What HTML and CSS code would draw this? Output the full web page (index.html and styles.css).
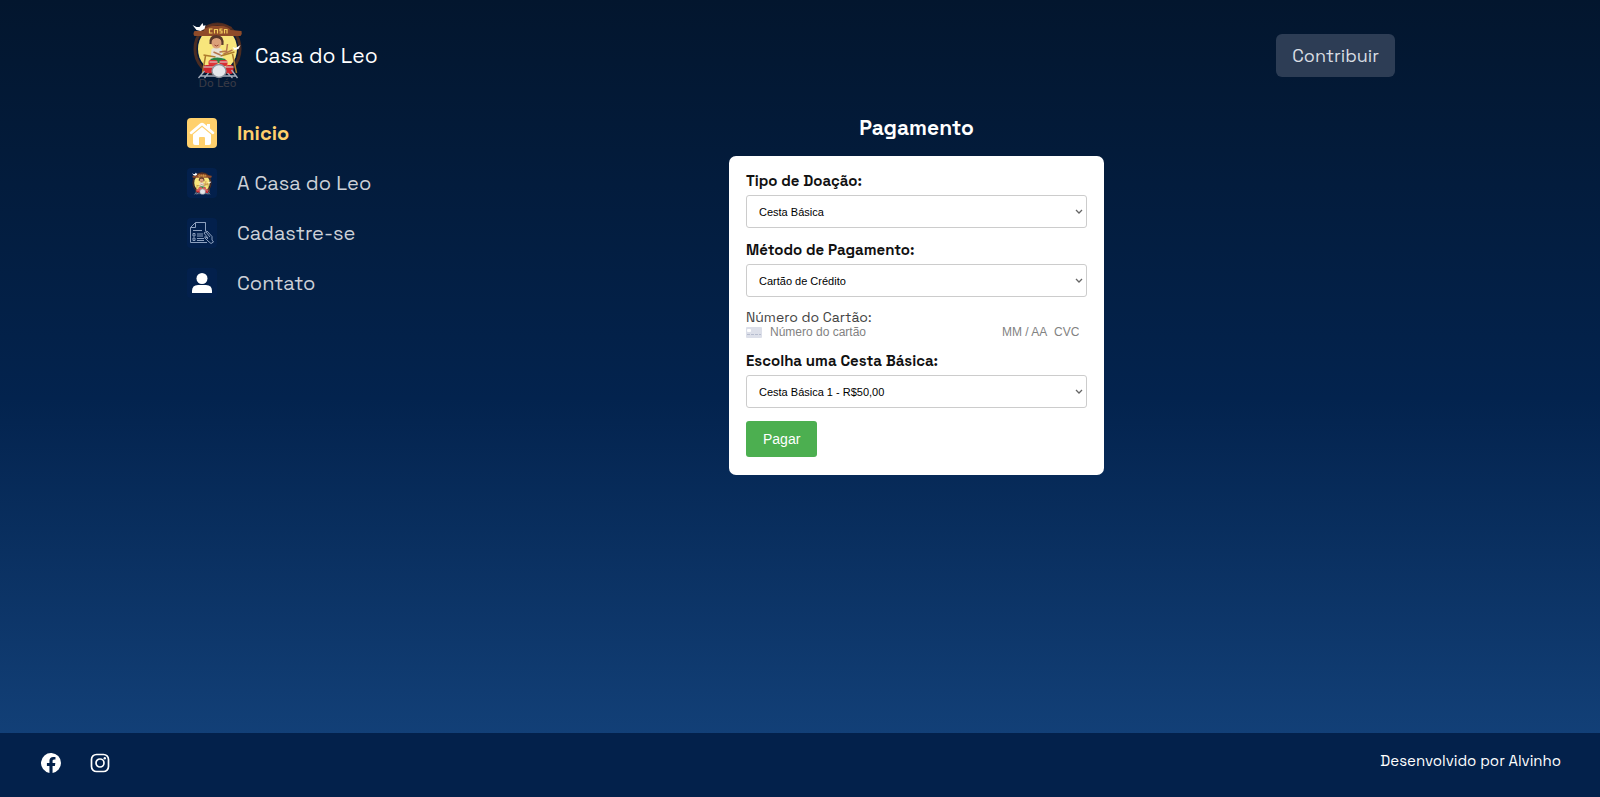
FILE: index.html
```html
<!DOCTYPE html>
<html lang="pt-BR">
<head>
<meta charset="utf-8">
<meta name="viewport" content="width=device-width, initial-scale=1">
<title>Casa do Leo - Pagamento</title>
<link rel="stylesheet" href="styles.css">
</head>
<body>
<svg class="sprite" aria-hidden="true">
  <symbol id="drum" viewBox="0 0 50 57">
    <ellipse cx="25" cy="27" rx="22.500" ry="25" fill="#0a1a38" stroke="#4a2c22" stroke-width="3"/>
    <ellipse cx="25" cy="27" rx="19.500" ry="22" fill="#f8e67c"/>
    <path d="M2 9Q0 12 2 14H48Q50 12 49 9L38 8Q36 4 31 4H19Q13 4 11 9Z" fill="#8f4b29"/>
    <path d="M11 6Q25 -1 39 6" fill="none" stroke="#5c3020" stroke-width="2"/>
    <path d="M20 7h-3v4h3M22 11.500v-4h3v4M30 7h-2.500v2h2v2h-2.500M32 11.500v-4h2.500v4" fill="none" stroke="#f6cf5c" stroke-width="1.200"/>
    <path d="M0 3l4 2 3 0 3-4 1 3 2-1-1 4-4 2-4-1z" fill="#fff"/>
    <path d="M40 25l3 1 5-3-2 4-4 1z" fill="#fff"/>
    <path d="M19 27q5-3 10 0l2 11H18z" fill="#e6e2d6"/>
    <path d="M17 22q-1-9 7-9 8 0 7 10z" fill="#59372a"/>
    <ellipse cx="24" cy="21" rx="5" ry="5.500" fill="#dba079"/>
    <path d="M19 18q5-4 10 0l-1-3h-7z" fill="#59372a"/>
    <path d="M22 23q2 2 4 0" fill="none" stroke="#9c4934" stroke-width="1"/>
    <path d="M21 30l7 3M27 30l7-1 1-7M31 32l9-4" fill="none" stroke="#b5764c" stroke-width="1.500"/>
    <path d="M11 33l12 2M28 34l14-4M13 34l-3 17M40 32l4 19" fill="none" stroke="#ad7b2c" stroke-width="1.500"/>
    <path d="M18 37q6-3 15 0v4H18z" fill="#268343"/>
    <rect x="16" y="38" width="9" height="6" rx="2" fill="#df3438"/>
    <rect x="27" y="38" width="8" height="6" rx="2" fill="#d92f34"/>
    <rect x="11" y="43" width="10" height="8" rx="3" fill="#cf262d"/>
    <rect x="33" y="43" width="8" height="9" rx="3" fill="#cf262d"/>
    <path d="M11 45h10M17 40h8M27 40h8M33 45h8" stroke="#ddd" stroke-width="1.200"/>
    <path d="M12 49l-6 7M39 48l6 8M16 51l-4 5M35 51l5 5M8 54h36" fill="none" stroke="#a5adba" stroke-width="1.300"/>
    <ellipse cx="26.500" cy="49" rx="7" ry="6.500" fill="#e5e7eb" stroke="#8c929d" stroke-width="1.300"/>
  </symbol>
</svg>

<div class="page">
  <header class="header">
    <a class="brand" href="#inicio">
      <span class="brand-logo">
        <svg class="brand-art" aria-hidden="true"><use href="#drum"/></svg>
        <span class="brand-caption" aria-hidden="true">Do Léo</span>
      </span>
      <span>Casa do Leo</span>
    </a>
    <button class="contribute" type="button">Contribuir</button>
  </header>

  <div class="columns">
    <nav class="menu" aria-label="Principal">
      <a class="menu-item active" href="#inicio">
        <span class="menu-icon"><svg viewBox="0 0 30 30" width="30" height="30" aria-hidden="true"><path d="M3 14L13 5.500Q15 4 17 5.500L20 8V6H23V10.500L27 14Q28 15 26.500 16Q25.500 16.500 24.500 15.500L15 7.500L5.500 15.500Q4.500 16.500 3.500 16Q2 15 3 14Z" fill="#fff"/><path d="M6 16.500L15 9L24 16.500V25Q24 27 22 27H18V20Q18 19 17 19H13Q12 19 12 20V27H8Q6 27 6 25Z" fill="#fff"/></svg></span>Inicio
      </a>
      <a class="menu-item" href="#casa">
        <span class="menu-icon"><svg width="20" height="23" aria-hidden="true"><use href="#drum"/></svg></span>A Casa do Leo
      </a>
      <a class="menu-item" href="#cadastro">
        <span class="menu-icon"><svg viewBox="0 0 30 30" width="30" height="30" fill="none" stroke="#8da0be" stroke-width="1" aria-hidden="true"><path d="M18.500 12V4.500H8.500L3.500 9.500V24.500H20M3.500 9.500H8.500V4.500M18.500 4.500V13"/><path d="M6 12.500H15M6 15.500H8V18H6ZM10 16H16M10 18H16M6 20H8V22.500H6ZM10 20.500H17M10 22.500H17"/><path d="M17 15L20 13L25 18.500V22L26.500 24L24 25.500L21 23L18 20Q17 18 19 19L21 21M17 15L21 20M19 14L23 19"/></svg></span>Cadastre-se
      </a>
      <a class="menu-item" href="#contato">
        <span class="menu-icon"><svg viewBox="0 0 30 30" width="30" height="30" fill="#fff" aria-hidden="true"><circle cx="15" cy="10.500" r="5.500"/><path d="M5 25V23Q5 17 11 17H19Q25 17 25 23V25Z"/></svg></span>Contato
      </a>
    </nav>

    <main class="payment">
      <h1 class="title">Pagamento</h1>
      <form class="card">
        <div class="field">
          <label class="label" for="tipo">Tipo de Doação:</label>
          <select class="select" id="tipo"><option>Cesta Básica</option></select>
        </div>
        <div class="field">
          <label class="label" for="metodo">Método de Pagamento:</label>
          <select class="select" id="metodo"><option>Cartão de Crédito</option></select>
        </div>
        <div class="card-number">
          <label class="label-light" for="numero">Número do Cartão:</label>
          <div class="card-row">
            <svg viewBox="0 0 16 11" width="16" height="11" aria-hidden="true"><rect width="16" height="11" rx="1" fill="#dcdfe9"/><rect x="1" y="2" width="4" height="3" rx="1" fill="#fff"/><path d="M1 7.500H15" stroke="#b7bdcf" stroke-dasharray="3 1"/></svg>
            <input class="bare number" id="numero" type="text" placeholder="Número do cartão">
            <input class="bare expiry" type="text" placeholder="MM / AA" aria-label="Validade">
            <input class="bare cvc" type="text" placeholder="CVC" aria-label="CVC">
          </div>
        </div>
        <div class="field">
          <label class="label" for="cesta">Escolha uma Cesta Básica:</label>
          <select class="select" id="cesta"><option>Cesta Básica 1 - R$50,00</option></select>
        </div>
        <button class="pay" type="submit">Pagar</button>
      </form>
    </main>
  </div>
</div>

<footer class="footer">
  <div class="social">
    <a href="#facebook" aria-label="Facebook"><svg viewBox="0 0 20 20" width="20" height="20" aria-hidden="true"><path fill="#fff" d="M20 10A10 10 0 1 0 8.440 19.880V12.890H5.900V10H8.440V7.800C8.440 5.290 9.930 3.900 12.220 3.900C13.310 3.900 14.450 4.100 14.450 4.100V6.560H13.190C11.950 6.560 11.560 7.330 11.560 8.120V10H14.340L13.890 12.890H11.560V19.880A10 10 0 0 0 20 10Z"/></svg></a>
    <a href="#instagram" aria-label="Instagram"><svg viewBox="0 0 20 20" width="20" height="20" fill="none" stroke="#fff" stroke-width="1.700" aria-hidden="true"><rect x="1.500" y="1.500" width="17" height="17" rx="5"/><circle cx="10" cy="10" r="4"/><circle cx="14.800" cy="5.200" r="1.200" fill="#fff" stroke="none"/></svg></a>
  </div>
  <p class="credit">Desenvolvido por Alvinho</p>
</footer>
</body>
</html>
```

FILE: styles.css
```css
* {
  box-sizing: border-box;
}

body {
  margin: 0;
  min-height: 100vh;
  display: flex;
  flex-direction: column;
  background: linear-gradient(180deg, #03162e 0%, #03234e 50%, #15457f 100%);
  color: #fff;
  font-family: "Space Grotesk", Inter, "Liberation Sans", sans-serif;
}

a {
  color: inherit;
  text-decoration: none;
}

svg {
  display: block;
}

.sprite {
  position: absolute;
  width: 0;
  height: 0;
}

.page {
  flex: 1;
  width: 100%;
  max-width: 1226px;
  margin: 0 auto;
  padding: 23px 18px 24px 0;
}

.header {
  display: flex;
  align-items: center;
  justify-content: space-between;
  height: 64px;
  padding-left: 5px;
}

.brand {
  display: flex;
  align-items: center;
  gap: 12px;
  font-size: 21px;
}

.brand-logo {
  display: flex;
  flex-direction: column;
  align-items: center;
}

.brand-art {
  width: 51px;
  height: 57px;
}

.brand-caption {
  color: #3a3b46;
  font-family: "DejaVu Sans", sans-serif;
  font-size: 11px;
  line-height: 9px;
}

.contribute {
  padding: 8px 16px;
  border: 0;
  border-radius: 6px;
  background: #2d3d55;
  color: #d8dce2;
  font: inherit;
  font-size: 18px;
  line-height: 27px;
}

.columns {
  display: grid;
  grid-template-columns: 251px 1fr;
  padding-top: 27px;
}

.menu {
  display: flex;
  flex-direction: column;
  gap: 20px;
  padding-top: 4px;
}

.menu-item {
  display: flex;
  align-items: center;
  gap: 20px;
  color: #ccd0d7;
  font-size: 20px;
  line-height: 30px;
}

.menu-item.active {
  color: #ffd06c;
  font-weight: 600;
}

.menu-icon {
  display: flex;
  align-items: center;
  justify-content: center;
  width: 30px;
  height: 30px;
  border-radius: 4px;
  background: #03204c;
}

.active .menu-icon {
  background: #ffd06c;
}

.payment {
  display: flex;
  flex-direction: column;
  align-items: center;
  gap: 14px;
}

.title {
  margin: 0;
  font-size: 21px;
  font-weight: 600;
  line-height: 28px;
}

.card {
  display: flex;
  flex-direction: column;
  gap: 13px;
  width: 100%;
  max-width: 375px;
  padding: 16px 17px 18px;
  border-radius: 7px;
  background: #fff;
  color: #111;
}

.field {
  display: flex;
  flex-direction: column;
  gap: 5px;
}

.label {
  font-size: 15px;
  font-weight: 600;
  line-height: 18px;
}

.select {
  appearance: none;
  height: 33px;
  padding: 0 12px;
  border: 1px solid #ccc;
  border-radius: 3px;
  background: #fff url("data:image/svg+xml,%3Csvg xmlns='http://www.w3.org/2000/svg' width='8' height='6'%3E%3Cpath d='M1 1l3 3 3-3' fill='none' stroke='%23666' stroke-width='1.3'/%3E%3C/svg%3E") no-repeat right 3px center;
  color: #000;
  font-family: "Liberation Sans", sans-serif;
  font-size: 11px;
}

.card-number {
  display: flex;
  flex-direction: column;
}

.label-light {
  color: #444;
  font-size: 14px;
  line-height: 15px;
}

.card-row {
  display: flex;
  align-items: center;
  padding-right: 8px;
}

.bare {
  min-width: 0;
  height: 14px;
  padding: 0;
  border: 0;
  background: transparent;
  font-family: "Liberation Sans", sans-serif;
  font-size: 12px;
}

.bare::placeholder {
  color: #828282;
}

.number {
  flex: 1;
  margin-left: 8px;
}

.expiry {
  width: 52px;
}

.cvc {
  width: 25px;
}

.pay {
  align-self: flex-start;
  padding: 9px 17px;
  border: 0;
  border-radius: 3px;
  background: #4caf50;
  color: #fff;
  font-family: "Liberation Sans", sans-serif;
  font-size: 14px;
  line-height: 18px;
}

.footer {
  display: flex;
  justify-content: space-between;
  min-height: 64px;
  padding: 20px 39px 20px 41px;
  background: #03214b;
}

.social {
  display: flex;
  gap: 29px;
}

.credit {
  margin: 0;
  font-size: 15px;
  line-height: 16px;
}
```
